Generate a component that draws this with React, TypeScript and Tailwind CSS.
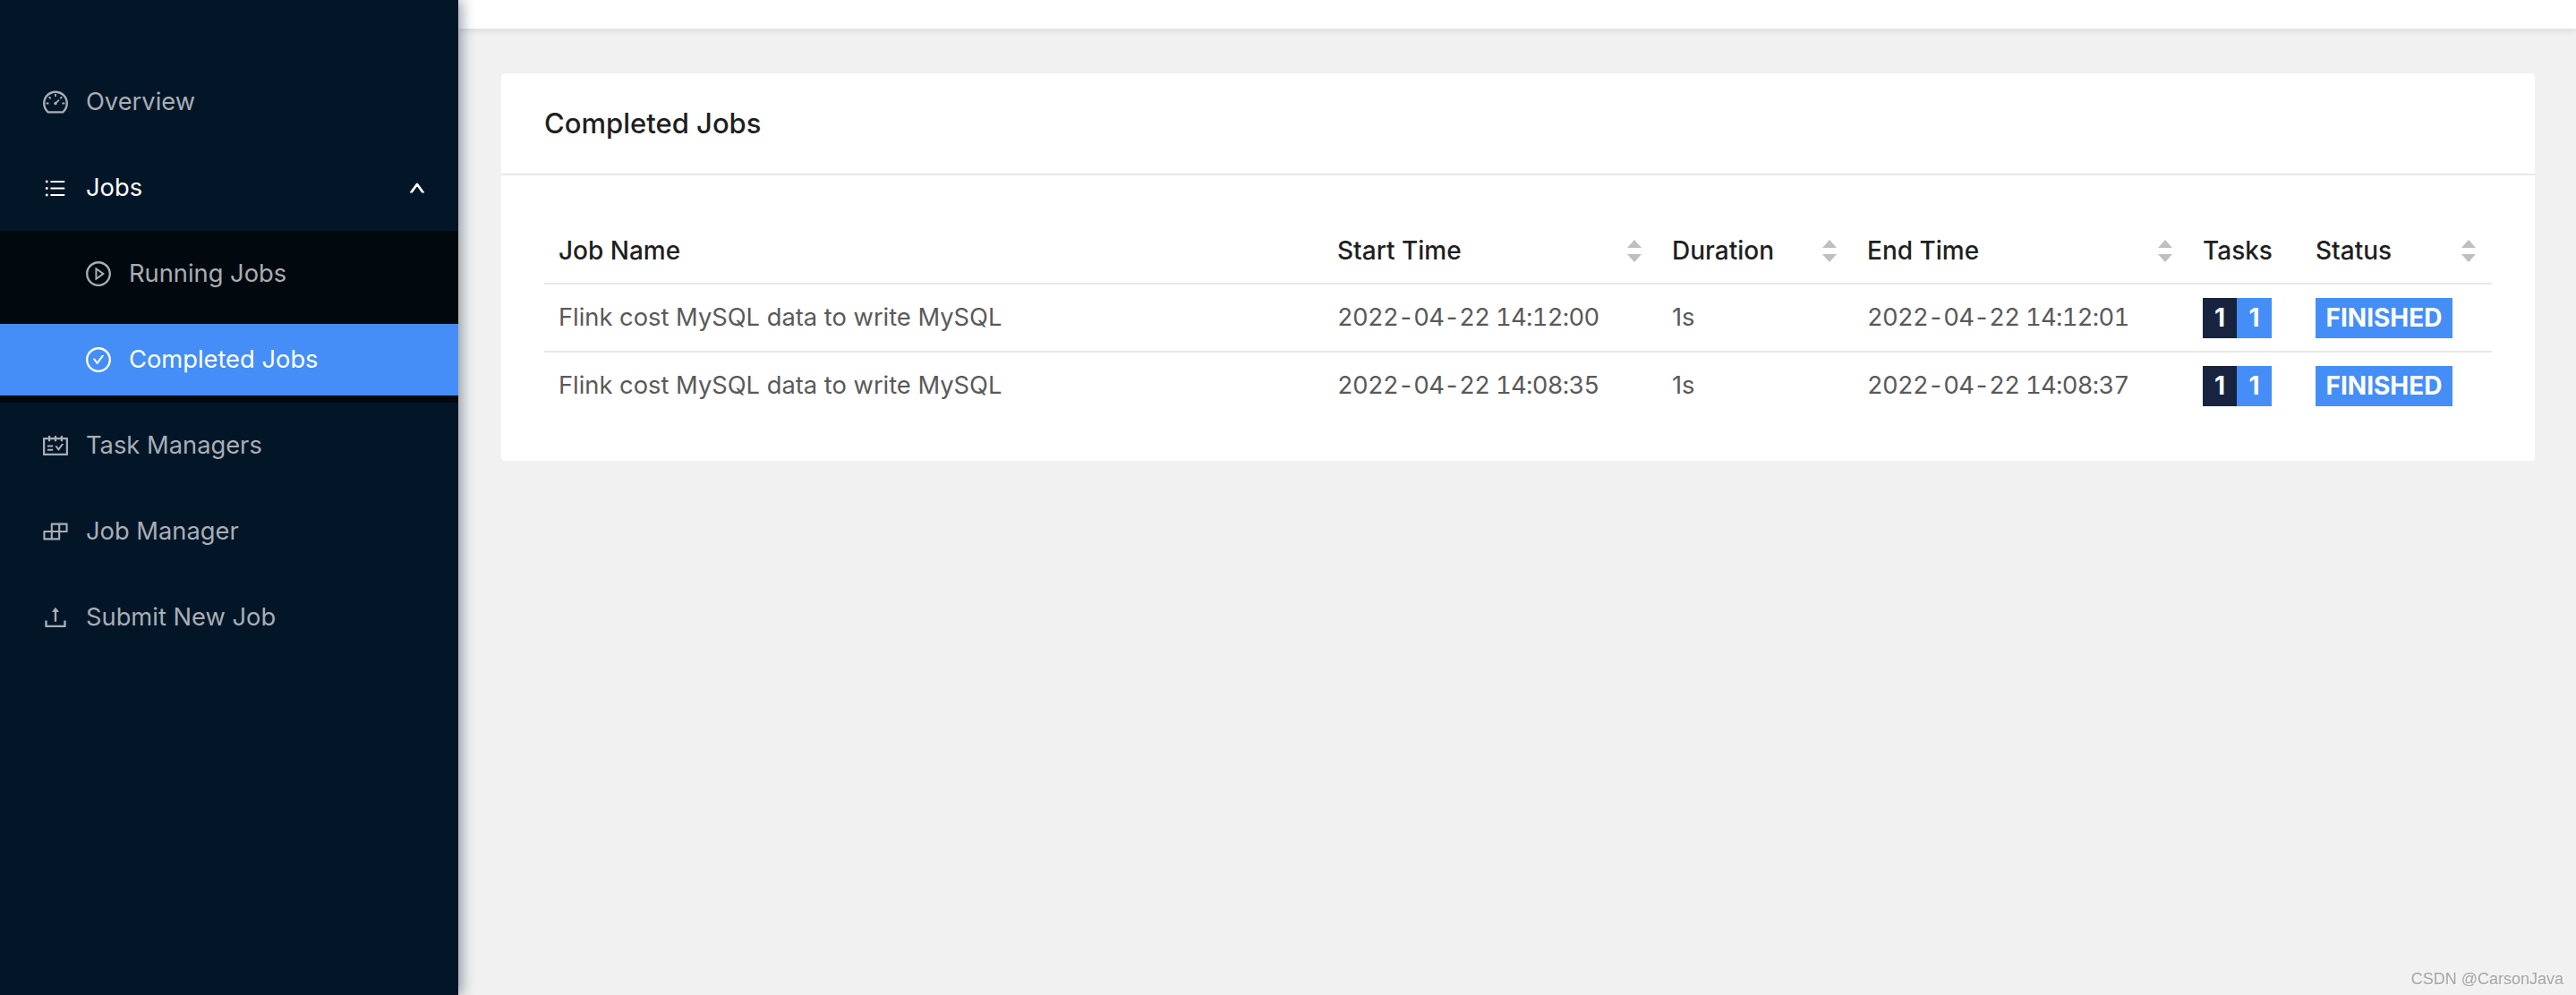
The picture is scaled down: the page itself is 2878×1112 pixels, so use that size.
import type { ReactNode } from 'react';
import {
  AiOutlineBars,
  AiOutlineBuild,
  AiOutlineCheckCircle,
  AiOutlineDashboard,
  AiOutlinePlayCircle,
  AiOutlineSchedule,
  AiOutlineUp,
  AiOutlineUpload,
} from 'react-icons/ai';

const jobs = [
  { name: 'Flink cost MySQL data to write MySQL', start: '2022-04-22 14:12:00', duration: '1s', end: '2022-04-22 14:12:01' },
  { name: 'Flink cost MySQL data to write MySQL', start: '2022-04-22 14:08:35', duration: '1s', end: '2022-04-22 14:08:37' },
];

function MenuItem({ icon, label }: { icon: ReactNode; label: string }) {
  return (
    <div className="flex h-20 items-center gap-[18px] pl-[46px] text-[#a8aeb5]">
      <span className="text-[32px]">{icon}</span>
      <span>{label}</span>
    </div>
  );
}

function Sorter() {
  return (
    <svg width="16" height="25" viewBox="0 0 16 25" className="shrink-0 fill-[#bfbfbf]">
      <polygon points="8,0 16,9 0,9" />
      <polygon points="0,16 16,16 8,25" />
    </svg>
  );
}

function HeadCell({ label, sortable = true }: { label: string; sortable?: boolean }) {
  return (
    <th className="border-b-2 border-[#e8e8e8] p-0 text-left text-[28px] font-medium text-[#1f1f1f]">
      <div className="flex h-[72px] items-center justify-between pr-[18px] pl-4">
        <span>{label}</span>
        {sortable && <Sorter />}
      </div>
    </th>
  );
}

export default function App() {
  return (
    <div className="relative flex h-[1112px] overflow-hidden bg-[#f1f1f1] font-['Inter',sans-serif] text-[27.3px]">
      <aside className="z-10 flex w-[512px] shrink-0 flex-col gap-4 bg-[#031628] pt-[74px] shadow-[4px_0_14px_rgba(0,21,41,0.4)]">
        <MenuItem icon={<AiOutlineDashboard />} label="Overview" />
        <div className="flex h-20 items-center pr-[36px] pl-[48px] text-white">
          <span className="mr-[21px] text-[27px]"><AiOutlineBars /></span>
          <span>Jobs</span>
          <AiOutlineUp className="ml-auto text-[20px]" strokeWidth={60} />
        </div>
        <div className="-mt-2 -mb-2 bg-[#01090f] py-2">
          <div className="mb-4 flex h-20 items-center gap-[18px] pl-[94px] text-[#a8aeb5]">
            <span className="text-[32px]"><AiOutlinePlayCircle /></span>
            <span>Running Jobs</span>
          </div>
          <div className="flex h-20 items-center gap-[18px] bg-[#458ef7] pl-[94px] text-white">
            <span className="text-[32px]"><AiOutlineCheckCircle /></span>
            <span>Completed Jobs</span>
          </div>
        </div>
        <MenuItem icon={<AiOutlineSchedule />} label="Task Managers" />
        <MenuItem icon={<AiOutlineBuild />} label="Job Manager" />
        <MenuItem icon={<AiOutlineUpload />} label="Submit New Job" />
      </aside>

      <main className="min-w-0 flex-1">
        <div className="h-8 bg-white shadow-[0_2px_8px_rgba(0,21,41,0.1)]" />
        <div className="pt-[50px] pr-[46px] pl-12">
          <section className="rounded-[4px] bg-white">
            <h1 className="flex h-[114px] items-center border-b-2 border-[#e8e8e8] pl-12 text-[31px] font-medium text-[#1f1f1f]">
              Completed Jobs
            </h1>
            <div className="px-12 pt-12 pb-[47px]">
              <table className="w-full table-fixed border-collapse">
                <colgroup>
                  <col className="w-[870px]" />
                  <col className="w-[374px]" />
                  <col className="w-[218px]" />
                  <col className="w-[375px]" />
                  <col className="w-[126px]" />
                  <col className="w-[213px]" />
                </colgroup>
                <thead>
                  <tr>
                    <HeadCell label="Job Name" sortable={false} />
                    <HeadCell label="Start Time" />
                    <HeadCell label="Duration" />
                    <HeadCell label="End Time" />
                    <HeadCell label="Tasks" sortable={false} />
                    <HeadCell label="Status" />
                  </tr>
                </thead>
                <tbody className="text-[#595959]">
                  {jobs.map((job, i) => (
                    <tr key={job.start} className={i === 0 ? 'border-b-2 border-[#e8e8e8]' : ''}>
                      <td className={i === 0 ? 'h-[76px] pl-4' : 'h-[75px] pl-4'}>{job.name}</td>
                      <td className="pl-4 tracking-[-0.67px] tabular-nums">{job.start}</td>
                      <td className="pl-4">{job.duration}</td>
                      <td className="pl-4 tracking-[-0.67px] tabular-nums">{job.end}</td>
                      <td className="pl-4">
                        <div className="flex h-[45px] w-[77px] text-[28px] font-bold text-white">
                          <span className="flex w-[38px] items-center justify-center bg-[#17233f]">1</span>
                          <span className="flex flex-1 items-center justify-center bg-[#458ef7]">1</span>
                        </div>
                      </td>
                      <td className="pl-4">
                        <span className="flex h-[45px] w-[153px] items-center justify-center bg-[#458ef7] text-[28px] font-bold text-white">
                          FINISHED
                        </span>
                      </td>
                    </tr>
                  ))}
                </tbody>
              </table>
            </div>
          </section>
        </div>
      </main>

      <span className="absolute right-[14px] bottom-[4px] font-['Liberation_Sans',sans-serif] text-[18px] text-[#a6a6a6] [text-shadow:1px_1px_0_#fff]">
        CSDN @CarsonJava
      </span>
    </div>
  );
}
